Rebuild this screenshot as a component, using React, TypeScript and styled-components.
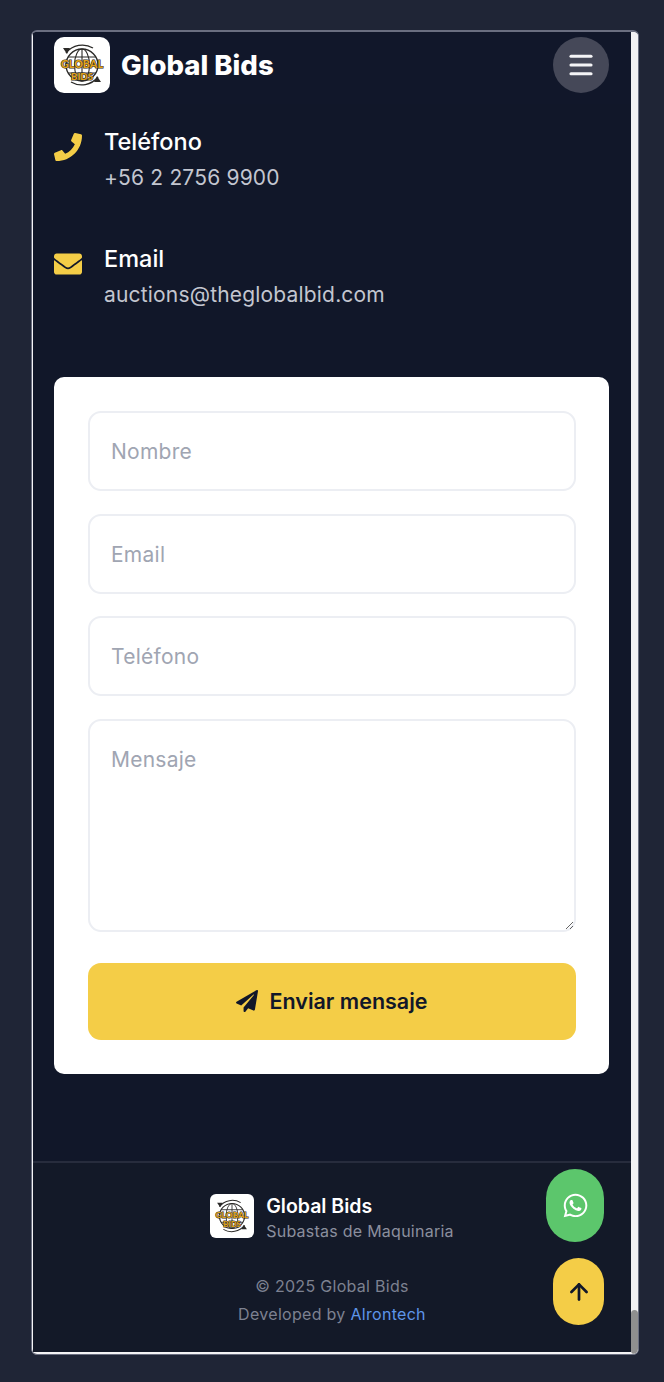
import styled, { createGlobalStyle } from 'styled-components';
import { FaEnvelope, FaPaperPlane, FaPhone, FaWhatsapp } from 'react-icons/fa';
import { ArrowUp, Menu } from 'lucide-react';

const GlobalStyle = createGlobalStyle`
  html, body {
    margin: 0;
    padding: 0;
    background: #1f2536;
    font-family: 'Inter', 'Liberation Sans', sans-serif;
  }
  * {
    box-sizing: border-box;
  }
`;

function Logo({ size }: { size: number }) {
  return (
    <LogoBox $size={size}>
      <svg viewBox='0 0 56 56' width={size} height={size}>
        <g fill='none' stroke='#2b2a28'>
          <circle cx='28' cy='28' r='16' strokeWidth='1.4' />
          <ellipse cx='28' cy='28' rx='7.5' ry='16' strokeWidth='1.1' />
          <path d='M28 12v32M14 20h28M14 36h28' strokeWidth='1.1' />
          <path d='M12 16a21 21 0 0 1 27-5' strokeWidth='1.3' />
          <path d='M44 40a21 21 0 0 1-27 5' strokeWidth='1.3' />
        </g>
        <path d='M9 11l7 0-3 6zM47 45l-7 0 3-6z' fill='#2b2a28' />
        <LogoText x='28' y='31' fontSize='10.5' textLength='42' lengthAdjust='spacingAndGlyphs'>
          GLOBAL
        </LogoText>
        <LogoText x='28' y='42.5' fontSize='9.5' textLength='22' lengthAdjust='spacingAndGlyphs'>
          BIDS
        </LogoText>
      </svg>
    </LogoBox>
  );
}

function App() {
  return (
    <>
      <GlobalStyle />
      <Page>
        <Frame>
          <Content>
            <Header>
              <Brand>
                <Logo size={56} />
                <BrandName>Global Bids</BrandName>
              </Brand>
              <MenuButton aria-label='Menu'>
                <Menu size={30} strokeWidth={2.5} />
              </MenuButton>
            </Header>

            <Contact>
              <ContactRow>
                <ContactIcon>
                  <FaPhone size={28} />
                </ContactIcon>
                <div>
                  <ContactTitle>Teléfono</ContactTitle>
                  <ContactValue>+56 2 2756 9900</ContactValue>
                </div>
              </ContactRow>
              <ContactRow>
                <ContactIcon>
                  <FaEnvelope size={28} />
                </ContactIcon>
                <div>
                  <ContactTitle>Email</ContactTitle>
                  <ContactValue>auctions@theglobalbid.com</ContactValue>
                </div>
              </ContactRow>
            </Contact>

            <FormCard>
              <Field placeholder='Nombre' />
              <Field placeholder='Email' />
              <Field placeholder='Teléfono' />
              <MessageField placeholder='Mensaje' />
              <SubmitButton type='button'>
                <FaPaperPlane size={22} />
                Enviar mensaje
              </SubmitButton>
            </FormCard>

            <Footer>
              <FooterBrand>
                <Logo size={44} />
                <div>
                  <FooterName>Global Bids</FooterName>
                  <FooterTagline>Subastas de Maquinaria</FooterTagline>
                </div>
              </FooterBrand>
              <Legal>© 2025 Global Bids</Legal>
              <Legal>
                Developed by <DevLink>Alrontech</DevLink>
              </Legal>
            </Footer>
          </Content>

          <ScrollTrack>
            <ScrollThumb />
          </ScrollTrack>

          <WhatsappButton aria-label='WhatsApp'>
            <FaWhatsapp size={27} />
          </WhatsappButton>
          <TopButton aria-label='Subir'>
            <ArrowUp size={26} strokeWidth={2.5} />
          </TopButton>
        </Frame>
      </Page>
    </>
  );
}

export default App;

const Page = styled.div`
  width: 664px;
  height: 1382px;
  padding: 30px 25px 27px 31px;
  overflow: hidden;
`;

const Frame = styled.div`
  position: relative;
  height: 1325px;
  display: flex;
  border: 1px solid #6a6e80;
  border-top-width: 2px;
  border-radius: 6px;
  overflow: hidden;
  background: #f1f1f3;
`;

const Content = styled.div`
  flex: 1;
  min-width: 0;
  display: flex;
  flex-direction: column;
  background: #111729;
  border-left: 1px solid #f4f4f6;
  border-bottom: 2px solid #f4f4f6;
`;

const Header = styled.div`
  height: 72px;
  flex-shrink: 0;
  padding: 5px 22px 11px 21px;
  display: flex;
  align-items: flex-start;
  justify-content: space-between;
  background: #11172a;
`;

const Brand = styled.div`
  display: flex;
  align-items: center;
  gap: 11px;
`;

const LogoBox = styled.div<{ $size: number }>`
  width: ${(p) => p.$size}px;
  height: ${(p) => p.$size}px;
  flex-shrink: 0;
  background: #fff;
  border-radius: ${(p) => (p.$size > 50 ? 10 : 6)}px;
  overflow: hidden;
`;

const LogoText = styled.text`
  font-family: 'Lato', 'Liberation Sans', sans-serif;
  font-weight: 900;
  fill: #e0a31a;
  stroke: #2b2a28;
  stroke-width: 1.2px;
  paint-order: stroke;
  text-anchor: middle;
`;

const BrandName = styled.div`
  font-family: 'Inter', 'Liberation Sans', sans-serif;
  font-size: 27.5px;
  font-weight: 800;
  letter-spacing: 0;
  color: #fff;
`;

const MenuButton = styled.button`
  width: 56px;
  height: 56px;
  display: flex;
  align-items: center;
  justify-content: center;
  padding: 0;
  border: none;
  border-radius: 50%;
  background: #454858;
  color: #f4f4f6;
`;

const Contact = styled.div`
  padding: 23px 20px 0 21px;
  display: flex;
  flex-direction: column;
  gap: 52px;
`;

const ContactRow = styled.div`
  display: flex;
  gap: 22px;
`;

const ContactIcon = styled.div`
  width: 28px;
  padding-top: 6px;
  flex-shrink: 0;
  display: flex;
  color: #f4cd47;
`;

const ContactTitle = styled.div`
  font-size: 23.5px;
  font-weight: 500;
  line-height: 30px;
  color: #fff;
`;

const ContactValue = styled.div`
  margin-top: 7px;
  font-size: 21px;
  line-height: 28px;
  letter-spacing: 0.18px;
  color: #c3c6d0;
`;

const FormCard = styled.div`
  margin: 68px 22px 0 21px;
  padding: 34px 33px 34px 34px;
  display: flex;
  flex-direction: column;
  background: #fff;
  border-radius: 10px;
`;

const Field = styled.input`
  width: 100%;
  height: 80px;
  margin-bottom: 22.5px;
  padding: 1px 21px 0;
  border: 2px solid #eceef3;
  border-radius: 13px;
  background: #fff;
  outline: none;
  font-family: inherit;
  font-size: 21px;
  letter-spacing: 0.25px;
  color: #111729;
  &::placeholder {
    color: #a0a5b2;
    opacity: 1;
  }
`;

const MessageField = styled.textarea`
  width: 100%;
  height: 213px;
  margin-bottom: 31px;
  padding: 26px 21px;
  border: 2px solid #eceef3;
  border-radius: 13px;
  background: #fff;
  outline: none;
  font-family: inherit;
  font-size: 21px;
  letter-spacing: 0.25px;
  &::placeholder {
    color: #a0a5b2;
    opacity: 1;
  }
`;

const SubmitButton = styled.button`
  height: 77px;
  display: flex;
  align-items: center;
  justify-content: center;
  gap: 11px;
  border: none;
  border-radius: 13px;
  background: #f4cd47;
  color: #111729;
  font-family: inherit;
  font-size: 21.5px;
  font-weight: 600;
`;

const Footer = styled.div`
  margin-top: 87px;
  flex: 1;
  padding-top: 31px;
  display: flex;
  flex-direction: column;
  align-items: center;
  background: #131928;
  border-top: 2px solid #272c3d;
`;

const FooterBrand = styled.div`
  display: flex;
  align-items: flex-start;
  gap: 12px;
  margin-bottom: 28px;
`;

const FooterName = styled.div`
  font-size: 19.5px;
  font-weight: 600;
  line-height: 25px;
  color: #fff;
`;

const FooterTagline = styled.div`
  font-size: 16px;
  line-height: 25px;
  letter-spacing: 0.25px;
  color: #8b8f9e;
`;

const Legal = styled.div`
  font-size: 16px;
  line-height: 28px;
  letter-spacing: 0.3px;
  color: #7d8191;
`;

const DevLink = styled.span`
  color: #5e95e8;
`;

const ScrollTrack = styled.div`
  width: 7px;
  flex-shrink: 0;
  display: flex;
  align-items: flex-end;
  background: #f1f1f3;
`;

const ScrollThumb = styled.div`
  width: 100%;
  height: 44px;
  border-radius: 4px;
  background: #8f8f8f;
`;

const WhatsappButton = styled.button`
  position: absolute;
  top: 1137px;
  left: 514px;
  width: 58px;
  height: 73px;
  display: flex;
  align-items: center;
  justify-content: center;
  padding: 0;
  border: none;
  border-radius: 50%/40%;
  background: #5cc66c;
  color: #fff;
`;

const TopButton = styled.button`
  position: absolute;
  top: 1226px;
  left: 521px;
  width: 51px;
  height: 67px;
  display: flex;
  align-items: center;
  justify-content: center;
  padding: 0;
  border: none;
  border-radius: 50%/38%;
  background: #f4cd47;
  color: #111729;
`;
